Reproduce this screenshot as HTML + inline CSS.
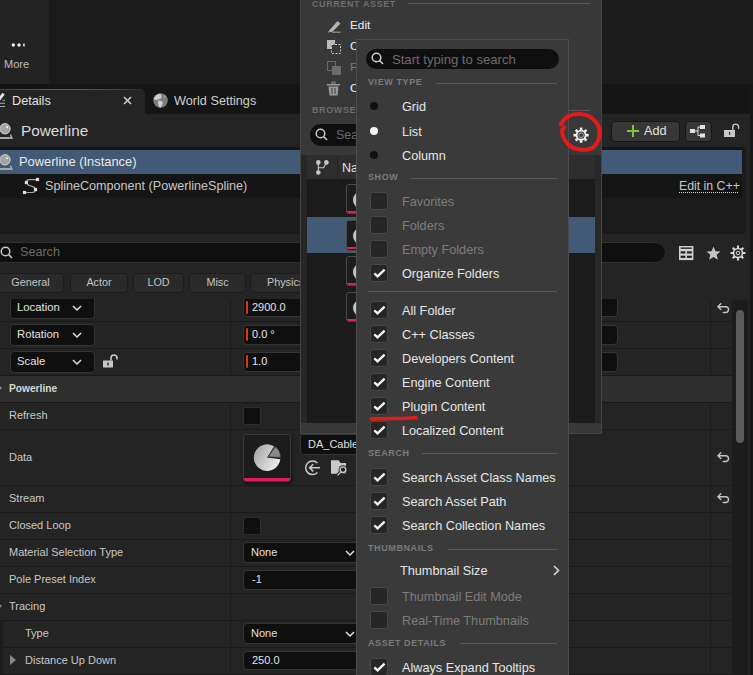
<!DOCTYPE html>
<html><head><meta charset="utf-8">
<style>
*{box-sizing:border-box;margin:0;padding:0}
html,body{width:753px;height:675px;overflow:hidden;background:#1a1a1a;font-family:"Liberation Sans",sans-serif;color:#c8c8c8}
.a{position:absolute}
.t{position:absolute;white-space:nowrap;line-height:1}
svg{position:absolute;overflow:visible}
.row{position:absolute;left:0;width:732px;height:27px;border-bottom:1px solid #1a1a1a;background:#242424}
.lbl{position:absolute;left:9px;font-size:11.5px;color:#c8c8c8;white-space:nowrap;line-height:1}
.vbox{position:absolute;background:#0f0f0f;border:1px solid #343434;border-radius:4px}
.chip{position:absolute;top:272.5px;height:20px;background:#2a2a2a;border:1px solid #1b1b1b;border-radius:4px;font-size:10.8px;color:#c4c4c4;text-align:center;line-height:16.5px}
.cb{position:absolute;left:370px;width:17.5px;height:17.5px;background:#262626;border:1px solid #474747;border-radius:3px}
.mi{position:absolute;left:402px;font-size:12.7px;color:#e6e6e6;white-space:nowrap;line-height:1}
.dis{color:#7c7c7c}
.hd{position:absolute;left:368px;font-size:9px;font-weight:bold;letter-spacing:0.6px;color:#7a7a7a;white-space:nowrap;line-height:1}
.hl{position:absolute;height:1px;background:#5a5a5a}
</style></head><body>

<!-- top area -->
<div class="a" style="left:0;top:0;width:49px;height:84px;background:#232323"></div>
<div class="a" style="left:49px;top:0;width:704px;height:84px;background:#1b1b1b"></div>
<div class="a" style="left:0;top:84px;width:753px;height:30px;background:#151515"></div>
<svg style="left:11px;top:42px" width="16" height="6"><circle cx="2.3" cy="3" r="1.7" fill="#f0f0f0"/><circle cx="8" cy="3" r="1.7" fill="#f0f0f0"/><path d="M13.6 1.3 A1.7 1.7 0 0 0 13.6 4.7Z" fill="#f0f0f0"/></svg>
<div class="t" style="left:4px;top:59px;font-size:11px;color:#bdbdbd">More</div>

<!-- tabs -->
<div class="a" style="left:0;top:88.5px;width:145px;height:25.5px;background:#242424;border-top-right-radius:5px;overflow:hidden"><div style="position:absolute;left:0;top:0;width:145px;height:1.5px;background:linear-gradient(90deg,#0f4a8a,#0a74e0 45%,#0f4a8a 85%,#2a2a2a)"></div></div>

<svg style="left:0;top:92px" width="8" height="16"><path d="M-1 7.6 L3.6 1.6" stroke="#e4e4e4" stroke-width="2.8"/><rect x="2.6" y="7.8" width="2.4" height="1" fill="#a8a8a8"/><rect x="0" y="10.8" width="5" height="1" fill="#a8a8a8"/><rect x="0" y="14" width="5" height="1" fill="#a8a8a8"/></svg>
<div class="t" style="left:12px;top:95px;font-size:12.7px;color:#e2e2e2">Details</div>
<svg style="left:123px;top:96px" width="9" height="9"><path d="M1 1L8 8M8 1L1 8" stroke="#cfcfcf" stroke-width="1.5"/></svg>
<svg style="left:152.5px;top:92.5px" width="15" height="15"><circle cx="7.5" cy="7.5" r="7.3" fill="#7e7e7e"/><path d="M1.2 4.5 Q3 1.5 6.5 0.8 Q9 1.5 8.2 3.5 Q9.5 5 7.2 5.6 Q5.8 6.8 4.2 6.2 Q3 7.6 1.3 6.8Z" fill="#cfcfcf"/><path d="M5.3 7.6 Q8.5 7.4 9.8 9.2 Q9.4 12.2 7.6 14.4 Q5.8 14.6 5.6 12.4 Q4.8 10 5.3 7.6Z" fill="#cfcfcf"/><path d="M10.5 2 Q12.5 3 13.2 4.6 Q11.8 4.8 10.5 2Z" fill="#bbb"/></svg>
<div class="t" style="left:174px;top:95px;font-size:12.7px;color:#cfcfcf">World Settings</div>

<!-- details panel -->
<div class="a" style="left:0;top:114px;width:750px;height:561px;background:#242424"></div><div class="a" style="left:750px;top:84px;width:3px;height:591px;background:#171717"></div>
<svg style="left:0;top:123px" width="16" height="17"><circle cx="5" cy="5.8" r="5.2" fill="#a2a2a2" stroke="#d6d6d6" stroke-width="0.9"/><rect x="6.1" y="3.3" width="1.8" height="1.8" fill="#f8f8f8"/><path d="M-1 14 H10.6 L9.9 11.6 L11.1 11.3 L13.2 15.9 H-1Z" fill="#a8a8a8"/></svg>
<div class="t" style="left:21px;top:123px;font-size:15.3px;color:#dcdcdc">Powerline</div>
<div class="a" style="left:611px;top:120.5px;width:68.5px;height:21px;background:#373737;border:1px solid #161616;border-radius:4px"></div>
<svg style="left:626px;top:124px" width="14" height="14"><path d="M7 1V13M1 7H13" stroke="#7fc43a" stroke-width="2"/></svg>
<div class="t" style="left:644px;top:125px;font-size:12.7px;color:#e0e0e0">Add</div>
<div class="a" style="left:684.5px;top:120.5px;width:27px;height:21px;background:#373737;border:1px solid #161616;border-radius:4px"></div>
<svg style="left:690px;top:125px" width="16" height="13"><rect x="0" y="4" width="5" height="4" fill="#e0e0e0"/><rect x="10" y="0" width="5" height="4" fill="#e0e0e0"/><rect x="10" y="8.5" width="5" height="4" fill="#e0e0e0"/><path d="M5 6H8M8 2V10.5M8 2H10M8 10.5H10" stroke="#e0e0e0" stroke-width="1"/></svg>
<svg style="left:724px;top:122px" width="15" height="16"><path d="M8.8 8V5A2.9 2.9 0 0 1 14.6 5V6.3" stroke="#c8c8c8" stroke-width="1.4" fill="none" stroke-linecap="round"/><rect x="0" y="8" width="11" height="7" fill="#c8c8c8"/><rect x="5" y="10" width="1.2" height="2.8" fill="#242424"/></svg>

<!-- tree -->
<div class="a" style="left:0;top:147px;width:746px;height:87px;background:#1b1b1b;border-bottom-right-radius:4px"></div><div class="a" style="left:0;top:147px;width:742px;height:51px;background:#151515"></div>
<div class="a" style="left:0;top:150px;width:742px;height:24px;background:#435a76"></div>
<svg style="left:0;top:154px" width="16" height="17"><circle cx="5" cy="5.8" r="5.2" fill="#a2a2a2" stroke="#d6d6d6" stroke-width="0.9"/><rect x="6.1" y="3.3" width="1.8" height="1.8" fill="#f8f8f8"/><path d="M-1 14 H10.6 L9.9 11.6 L11.1 11.3 L13.2 15.9 H-1Z" fill="#a8a8a8"/></svg>
<div class="t" style="left:19px;top:156px;font-size:12.9px;color:#e8e8e8">Powerline (Instance)</div>
<svg style="left:22px;top:177px" width="18" height="18"><path d="M15.5 2.6 H7 Q4.6 2.6 4.4 5.5 Q5.5 8.4 10 9.4 Q13.3 10.2 13.5 12.5 Q13.5 15.5 10.5 15.5 H2.5" stroke="#a8a8a8" stroke-width="1.1" fill="none"/><g fill="#dedede"><rect x="13.9" y="0.8999999999999999" width="3.2" height="3.2"/><rect x="2.8000000000000003" y="3.9" width="3.2" height="3.2"/><rect x="11.9" y="10.9" width="3.2" height="3.2"/><rect x="0.8999999999999999" y="13.9" width="3.2" height="3.2"/></g></svg>
<div class="t" style="left:45px;top:180px;font-size:12.6px;color:#c8c8c8">SplineComponent (PowerlineSpline)</div>
<div class="t" style="left:679px;top:180px;font-size:12.3px;color:#c8c8c8">Edit in C++</div>
<div class="a" style="left:679px;top:192px;width:60px;height:1px;background:repeating-linear-gradient(90deg,#d0d0d0 0 1px,transparent 1px 2px)"></div>

<!-- search -->
<div class="a" style="left:-10px;top:242px;width:676px;height:21px;background:#0f0f0f;border:1px solid #303030;border-radius:11px"></div>
<svg style="left:0;top:246px" width="14" height="14"><circle cx="5.5" cy="5.5" r="4.3" stroke="#c8c8c8" stroke-width="1.5" fill="none"/><path d="M8.5 8.5L12 12" stroke="#c8c8c8" stroke-width="1.6"/></svg>
<div class="t" style="left:20px;top:246px;font-size:12.6px;color:#6a6a6a">Search</div>
<svg style="left:678.8px;top:245.9px" width="15" height="15"><rect x="0" y="0" width="14.4" height="14.1" fill="#d0d0d0"/><g fill="#1f1f1f"><rect x="1.6" y="1.5" width="11.2" height="1.3"/><rect x="1.6" y="5.3" width="4.8" height="2.2"/><rect x="8" y="5.3" width="4.8" height="2.2"/><rect x="1.6" y="9.7" width="4.8" height="2.2"/><rect x="8" y="9.7" width="4.8" height="2.2"/></g></svg>
<svg style="left:705.5px;top:245.5px" width="15" height="15"><path d="M7.5 0.5 L9.5 5.2 L14.5 5.5 L10.7 8.8 L11.9 13.8 L7.5 11.1 L3.1 13.8 L4.3 8.8 L0.5 5.5 L5.5 5.2Z" fill="#c4c4c4"/></svg>
<svg style="left:730px;top:245px" width="16" height="16"><g stroke="#d8d8d8" stroke-width="2"><path d="M8 0.5V3.5M8 12.5V15.5M0.5 8H3.5M12.5 8H15.5M2.7 2.7L4.8 4.8M11.2 11.2L13.3 13.3M2.7 13.3L4.8 11.2M11.2 4.8L13.3 2.7"/></g><circle cx="8" cy="8" r="4.5" stroke="#d8d8d8" stroke-width="1.6" fill="none"/><circle cx="8" cy="8" r="1.8" stroke="#d8d8d8" stroke-width="1" fill="none"/></svg>

<!-- chips -->
<div class="chip" style="left:-6px;width:70px">&nbsp;General</div>
<div class="chip" style="left:70px;width:58px">Actor</div>
<div class="chip" style="left:133px;width:51px">LOD</div>
<div class="chip" style="left:189px;width:57px">Misc</div>
<div class="chip" style="left:250px;width:80px;text-align:left;padding-left:16px">Physics</div>

<!-- property rows -->
<div class="a" style="left:0;top:299px;width:753px;height:376px;overflow:hidden">
 <div style="position:absolute;left:0;top:-4px;width:753px;height:400px">
  <div class="row" style="top:0"></div>
  <div class="row" style="top:27px"></div>
  <div class="row" style="top:54px"></div>
  <div class="row" style="top:81px;background:#2e2e2e"></div>
  <div class="row" style="top:108px"></div>
  <div class="row" style="top:135px;height:56px"></div>
  <div class="row" style="top:191px"></div>
  <div class="row" style="top:218px"></div>
  <div class="row" style="top:245px"></div>
  <div class="row" style="top:272px"></div>
  <div class="row" style="top:299px"></div>
  <div class="row" style="top:326px"></div>
  <div class="row" style="top:353px"></div>
 </div>
</div>

<!-- property content (page coords) -->
<div class="a" style="left:230px;top:299px;width:1px;height:77px;background:#1a1a1a"></div>
<div class="a" style="left:230px;top:402px;width:1px;height:191px;background:#1a1a1a"></div>
<div class="a" style="left:230px;top:593px;width:1px;height:82px;background:#1a1a1a"></div>
<div class="a" style="left:710px;top:299px;width:1px;height:77px;background:#1a1a1a"></div><div class="a" style="left:710px;top:402px;width:1px;height:273px;background:#1a1a1a"></div>
<div class="a" style="left:732px;top:300px;width:16px;height:375px;background:#1c1c1c"></div>

<div class="a" style="left:736px;top:310px;width:8px;height:133px;background:#5a5a5a;border-radius:4px"></div>

<div class="a" style="left:0;top:299px;width:732px;height:376px;overflow:hidden">
 <div class="vbox" style="left:9.5px;top:-6px;width:85px;height:25.5px"></div>
 <div class="t" style="left:17px;top:3px;font-size:11.3px;color:#e2e2e2">Location</div>
 <svg style="left:72px;top:6px" width="10" height="6"><path d="M1 1L5 5L9 1" stroke="#e0e0e0" stroke-width="1.5" fill="none"/></svg>
 <div class="vbox" style="left:243px;top:-6px;width:80px;height:24px"></div>
 <div class="a" style="left:245.8px;top:2px;width:2.2px;height:13px;background:#d83a0e;border-radius:1px"></div>
 <div class="t" style="left:252px;top:3px;font-size:11px;color:#e6e6e6">2900.0</div>
 <div class="vbox" style="left:560px;top:-6px;width:58px;height:24px"></div>
</div>
<div class="vbox" style="left:9.5px;top:324.3px;width:85px;height:21.3px"></div>
<div class="t" style="left:17px;top:329px;font-size:11.3px;color:#e2e2e2">Rotation</div>
<svg style="left:72px;top:332px" width="10" height="6"><path d="M1 1L5 5L9 1" stroke="#e0e0e0" stroke-width="1.5" fill="none"/></svg>
<div class="vbox" style="left:243px;top:325px;width:80px;height:19.5px"></div>
<div class="a" style="left:245.8px;top:328px;width:2.2px;height:13px;background:#d83a0e;border-radius:1px"></div>
<div class="t" style="left:252px;top:329px;font-size:11px;color:#e6e6e6">0.0 °</div>
<div class="vbox" style="left:560px;top:325px;width:58px;height:19.5px"></div>

<div class="vbox" style="left:9.5px;top:351.3px;width:85px;height:21.3px"></div>
<div class="t" style="left:17px;top:356px;font-size:11.3px;color:#e2e2e2">Scale</div>
<svg style="left:72px;top:359px" width="10" height="6"><path d="M1 1L5 5L9 1" stroke="#e0e0e0" stroke-width="1.5" fill="none"/></svg>
<svg style="left:103px;top:354px" width="15" height="14"><path d="M8 6.5V4A3 3 0 0 1 14 4V5.5" stroke="#c8c8c8" stroke-width="1.6" fill="none"/><rect x="0" y="6.5" width="10" height="7" fill="#c8c8c8"/><rect x="4.3" y="8.5" width="1.4" height="3" fill="#242424"/></svg>
<div class="vbox" style="left:243px;top:352px;width:80px;height:19.5px"></div>
<div class="a" style="left:245.8px;top:355px;width:2.2px;height:13px;background:#d83a0e;border-radius:1px"></div>
<div class="t" style="left:252px;top:356px;font-size:11px;color:#e6e6e6">1.0</div>
<div class="vbox" style="left:560px;top:352px;width:58px;height:19.5px"></div>

<svg style="left:-3px;top:387px" width="6" height="5"><path d="M0 0H5L2.5 4Z" fill="#9a9a9a"/></svg>
<div class="t" style="left:9px;top:384px;font-size:10.2px;font-weight:bold;color:#d8d8d8">Powerline</div>

<div class="t" style="left:9px;top:410px;font-size:11px;color:#c8c8c8">Refresh</div>
<div class="a" style="left:243px;top:407px;width:18px;height:18px;background:#0f0f0f;border:1px solid #2e2e2e;border-radius:3px"></div>

<div class="t" style="left:9px;top:452px;font-size:11px;color:#c8c8c8">Data</div>
<div class="a" style="left:243.4px;top:434px;width:47.4px;height:48px;background:#1c1c1c;border:1px solid #3a3a3a;border-radius:3px;box-shadow:1px 2px 3px #151515;overflow:hidden"><div style="position:absolute;left:0;bottom:0;width:100%;height:2.6px;background:#dc1f5a"></div></div>

<svg style="left:253px;top:443px" width="30" height="30"><defs><linearGradient id="pg" x1="0" y1="0.2" x2="1" y2="0.8"><stop offset="0" stop-color="#a4a4a4"/><stop offset="1" stop-color="#f2f2f2"/></linearGradient></defs><path d="M14.1 14.6 L27.3 16.22 A13.3 13.3 0 1 1 21.15 3.32 Z" fill="url(#pg)"/><path d="M15.3 13.7 L22.2 3.87 A12 12 0 0 1 27.3 14.33 Z" fill="#8a8a8a" stroke="#4a4a4a" stroke-width="0.7"/></svg>
<div class="vbox" style="left:300px;top:434px;width:70px;height:21px"></div>
<div class="t" style="left:308px;top:439px;font-size:11px;color:#e0e0e0">DA_Cable</div>
<svg style="left:304px;top:459px" width="18" height="18"><path d="M13.4 4.1 A6.8 6.8 0 1 0 13.4 13.5" stroke="#c8c8c8" stroke-width="1.5" fill="none"/><path d="M16 8.8 H5.6 M9.2 5.2 L5.6 8.8 L9.2 12.4" stroke="#c8c8c8" stroke-width="1.6" fill="none"/></svg>
<svg style="left:330px;top:459px" width="18" height="19"><path d="M1 1.3 H8.8 L10.5 4 H16 V14.8 H1 Z" fill="#c8c8c8"/><path d="M10.6 13 L7.4 16.6" stroke="#242424" stroke-width="3.4"/><circle cx="13" cy="10.7" r="4.4" fill="#242424"/><circle cx="13" cy="10.7" r="2.8" stroke="#c8c8c8" stroke-width="1.4" fill="#242424"/><path d="M10.8 12.9 L7.6 16.4" stroke="#c8c8c8" stroke-width="1.4"/></svg>

<div class="t" style="left:9px;top:493px;font-size:11px;color:#c8c8c8">Stream</div>
<div class="t" style="left:9px;top:520px;font-size:11px;color:#c8c8c8">Closed Loop</div>
<div class="a" style="left:243px;top:517px;width:18px;height:18px;background:#0f0f0f;border:1px solid #2e2e2e;border-radius:3px"></div>
<div class="t" style="left:9px;top:547px;font-size:11px;color:#c8c8c8">Material Selection Type</div>
<div class="vbox" style="left:243px;top:542px;width:120px;height:21px"></div>
<div class="t" style="left:251px;top:547px;font-size:11px;color:#e0e0e0">None</div>
<svg style="left:345px;top:550px" width="10" height="6"><path d="M1 1L5 5L9 1" stroke="#e0e0e0" stroke-width="1.5" fill="none"/></svg>
<div class="t" style="left:9px;top:574px;font-size:11px;color:#c8c8c8">Pole Preset Index</div>
<div class="vbox" style="left:243px;top:570px;width:120px;height:20px"></div>
<div class="t" style="left:252px;top:574px;font-size:11px;color:#e0e0e0">-1</div>
<svg style="left:-3px;top:605px" width="6" height="5"><path d="M0 0H5L2.5 4Z" fill="#8a8a8a"/></svg>
<div class="t" style="left:9px;top:601px;font-size:11px;color:#c8c8c8">Tracing</div>
<div class="a" style="left:0;top:620px;width:3px;height:55px;background:#1c1c1c"></div>
<div class="t" style="left:25px;top:628px;font-size:11px;color:#c8c8c8">Type</div>
<div class="vbox" style="left:243px;top:623px;width:120px;height:21px"></div>
<div class="t" style="left:251px;top:628px;font-size:11px;color:#e0e0e0">None</div>
<svg style="left:345px;top:631px" width="10" height="6"><path d="M1 1L5 5L9 1" stroke="#e0e0e0" stroke-width="1.5" fill="none"/></svg>
<svg style="left:10px;top:655px" width="7" height="10"><path d="M0 0L6 5L0 10Z" fill="#8a8a8a"/></svg>
<div class="t" style="left:25px;top:655px;font-size:11px;color:#c8c8c8">Distance Up Down</div>
<div class="vbox" style="left:243px;top:651px;width:120px;height:19px"></div>
<div class="t" style="left:252px;top:655px;font-size:11px;color:#e6e6e6">250.0</div>

<svg style="left:717px;top:303px" width="14" height="12"><path d="M3.8 0.8L0.9 3.7L3.8 6.6M0.9 3.7H8.6A2.9 2.9 0 0 1 8.6 9.5H6.3" stroke="#c4c4c4" stroke-width="1.4" fill="none" stroke-linecap="round"/></svg>
<svg style="left:717px;top:452px" width="14" height="12"><path d="M3.8 0.8L0.9 3.7L3.8 6.6M0.9 3.7H8.6A2.9 2.9 0 0 1 8.6 9.5H6.3" stroke="#c4c4c4" stroke-width="1.4" fill="none" stroke-linecap="round"/></svg>
<svg style="left:717px;top:493px" width="14" height="12"><path d="M3.8 0.8L0.9 3.7L3.8 6.6M0.9 3.7H8.6A2.9 2.9 0 0 1 8.6 9.5H6.3" stroke="#c4c4c4" stroke-width="1.4" fill="none" stroke-linecap="round"/></svg>


<!-- content browser popup -->
<div class="a" style="left:300px;top:-2px;width:302px;height:435.5px;background:#383838;border:1px solid #454545;border-top:none"></div>
<div class="t" style="left:312px;top:-1px;font-size:9px;font-weight:bold;letter-spacing:0.6px;color:#6e6e6e;margin-top:0.5px">CURRENT ASSET</div>
<div class="hl" style="left:408px;top:3px;width:182px;background:#575757"></div>
<svg style="left:327px;top:19px" width="15" height="15"><path d="M3.2 10.3 L10.6 2 L13.4 4.6 L5.8 12.6 L0.8 13.6Z" fill="#b4b4b4"/><rect x="5" y="12.6" width="8.5" height="1.1" fill="#a0a0a0"/></svg>
<div class="t" style="left:350px;top:20px;font-size:11.8px;color:#f0f0f0">Edit</div>
<svg style="left:327px;top:40px" width="15" height="15"><rect x="0" y="0" width="8" height="9" fill="#b8b8b8"/><rect x="4.5" y="4.5" width="9" height="9" fill="#383838" stroke="#c8c8c8" stroke-width="1" stroke-dasharray="2 1.5"/></svg>
<div class="t" style="left:350px;top:41px;font-size:11.8px;color:#f0f0f0">C</div>
<svg style="left:327px;top:61px" width="15" height="15"><rect x="0.5" y="0.5" width="8" height="9" fill="none" stroke="#6a6a6a" stroke-width="1"/><rect x="5" y="5" width="9" height="9" fill="#6a6a6a"/></svg>
<div class="t" style="left:350px;top:62px;font-size:11.8px;color:#7a7a7a">F</div>
<svg style="left:327px;top:82px" width="14" height="14"><rect x="0" y="2" width="13" height="1.5" fill="#9a9a9a"/><rect x="5" y="0" width="3" height="2" fill="none" stroke="#9a9a9a" stroke-width="0.8"/><path d="M1.5 4.5H11.5L10.5 13.5H2.5Z" fill="#9a9a9a"/><path d="M5 6V12M8 6V12" stroke="#383838" stroke-width="1"/></svg>
<div class="t" style="left:350px;top:83px;font-size:11.8px;color:#f0f0f0">C</div>
<div class="t" style="left:312px;top:106px;font-size:9px;font-weight:bold;letter-spacing:0.6px;color:#6e6e6e">BROWSE</div>
<div class="hl" style="left:569px;top:110px;width:21px;background:#575757"></div>
<div class="a" style="left:310px;top:124px;width:60px;height:22px;background:#0f0f0f;border-radius:11px"></div>
<svg style="left:315px;top:128px" width="14" height="14"><circle cx="5.5" cy="5.5" r="4.3" stroke="#c8c8c8" stroke-width="1.5" fill="none"/><path d="M8.5 8.5L12 12" stroke="#c8c8c8" stroke-width="1.6"/></svg>
<div class="t" style="left:336px;top:129px;font-size:12.5px;color:#6a6a6a">Sea</div>
<!-- list -->
<div class="a" style="left:301px;top:155px;width:300px;height:268px;background:#262626"></div>
<div class="a" style="left:307px;top:155px;width:288px;height:24px;background:#2e2e2e"></div>
<div class="a" style="left:337px;top:155px;width:1px;height:24px;background:#242424"></div>
<svg style="left:314.5px;top:158.5px" width="15" height="16"><circle cx="3.3" cy="3.4" r="2.3" fill="#c8c8c8"/><circle cx="11.4" cy="3.4" r="2.3" fill="#c8c8c8"/><circle cx="3.3" cy="13.5" r="2.3" fill="#c8c8c8"/><path d="M3.3 3.4V13.5M11.4 3.4 L8.6 8.8 H3.3" stroke="#c8c8c8" stroke-width="1.1" fill="none"/></svg>
<div class="t" style="left:342px;top:162px;font-size:12.5px;color:#e0e0e0">Na</div>
<div class="a" style="left:307px;top:179px;width:288px;height:244px;background:#1b1b1b"></div>
<div class="a" style="left:307px;top:216.6px;width:288px;height:36.4px;background:#435a76"></div>
<div class="a" style="left:345.5px;top:183.7px;width:30px;height:30.5px;background:#1c1c1c;border:1.5px solid #4a4a4a;border-radius:3px;overflow:hidden"><div style="position:absolute;left:6.5px;top:6px;width:18px;height:18px;border-radius:50%;background:#c4c4c4"></div><div style="position:absolute;left:0;bottom:0.3px;width:100%;height:1.9px;background:#dc1f5a"></div></div>
<div class="a" style="left:345.5px;top:220px;width:30px;height:30.5px;background:#1c1c1c;border:1.5px solid #4a4a4a;border-radius:3px;overflow:hidden"><div style="position:absolute;left:6.5px;top:6px;width:18px;height:18px;border-radius:50%;background:#c4c4c4"></div><div style="position:absolute;left:0;bottom:0.3px;width:100%;height:1.9px;background:#dc1f5a"></div></div>
<div class="a" style="left:345.5px;top:255.8px;width:30px;height:30.5px;background:#1c1c1c;border:1.5px solid #4a4a4a;border-radius:3px;overflow:hidden"><div style="position:absolute;left:6.5px;top:6px;width:18px;height:18px;border-radius:50%;background:#c4c4c4"></div><div style="position:absolute;left:0;bottom:0.3px;width:100%;height:1.9px;background:#dc1f5a"></div></div>
<div class="a" style="left:345.5px;top:291.7px;width:30px;height:30.5px;background:#1c1c1c;border:1.5px solid #4a4a4a;border-radius:3px;overflow:hidden"><div style="position:absolute;left:6.5px;top:6px;width:18px;height:18px;border-radius:50%;background:#c4c4c4"></div><div style="position:absolute;left:0;bottom:0.3px;width:100%;height:1.9px;background:#dc1f5a"></div></div>
<div class="a" style="left:595px;top:155px;width:6px;height:268px;background:#282828"></div>
<div class="a" style="left:569px;top:123px;width:27px;height:32px;background:#383838"></div>
<div class="hl" style="left:569px;top:110px;width:21px;background:#575757"></div>

<!-- dropdown menu -->
<div class="a" style="left:356px;top:39px;width:213px;height:640px;background:#3a3a3a;border:1px solid #4c4c4c"></div>
<div class="a" style="left:366px;top:49px;width:193px;height:20px;background:#0f0f0f;border-radius:10px"></div>
<svg style="left:371px;top:52px" width="14" height="14"><circle cx="5.5" cy="5.5" r="4.3" stroke="#d0d0d0" stroke-width="1.5" fill="none"/><path d="M8.5 8.5L12 12" stroke="#d0d0d0" stroke-width="1.6"/></svg>
<div class="t" style="left:392px;top:53px;font-size:13.1px;color:#6c6c6c">Start typing to search</div>
<div class="hd" style="top:78.2px">VIEW TYPE</div><div class="hl" style="left:436px;top:82.7px;width:121px"></div>
<div class="a" style="left:370px;top:102px;width:8px;height:8px;border-radius:50%;background:#111"></div>
<div class="mi" style="top:101px">Grid</div>
<div class="a" style="left:370px;top:126.5px;width:8px;height:8px;border-radius:50%;background:#f4f4f4"></div>
<div class="mi" style="top:125.5px">List</div>
<div class="a" style="left:370px;top:150.5px;width:8px;height:8px;border-radius:50%;background:#111"></div>
<div class="mi" style="top:149.5px">Column</div>
<div class="hd" style="top:173.2px">SHOW</div><div class="hl" style="left:411px;top:177.7px;width:146px"></div>
<div class="cb" style="top:192.4px"></div>
<div class="mi dis" style="top:196px">Favorites</div>
<div class="cb" style="top:216.4px"></div>
<div class="mi dis" style="top:220px">Folders</div>
<div class="cb" style="top:240.4px"></div>
<div class="mi dis" style="top:244px">Empty Folders</div>
<div class="cb" style="top:264.4px"></div><svg style="left:373px;top:268px" width="13" height="11"><path d="M1.3 5.3L4.6 8.4L11.6 1.6" stroke="#f4f4f4" stroke-width="2.3" fill="none"/></svg>
<div class="mi" style="top:268px">Organize Folders</div>
<div class="hl" style="left:368px;top:291px;width:189px"></div>
<div class="cb" style="top:301.4px"></div><svg style="left:373px;top:305px" width="13" height="11"><path d="M1.3 5.3L4.6 8.4L11.6 1.6" stroke="#f4f4f4" stroke-width="2.3" fill="none"/></svg>
<div class="mi" style="top:305px">All Folder</div>
<div class="cb" style="top:325.4px"></div><svg style="left:373px;top:329px" width="13" height="11"><path d="M1.3 5.3L4.6 8.4L11.6 1.6" stroke="#f4f4f4" stroke-width="2.3" fill="none"/></svg>
<div class="mi" style="top:329px">C++ Classes</div>
<div class="cb" style="top:349.4px"></div><svg style="left:373px;top:353px" width="13" height="11"><path d="M1.3 5.3L4.6 8.4L11.6 1.6" stroke="#f4f4f4" stroke-width="2.3" fill="none"/></svg>
<div class="mi" style="top:353px">Developers Content</div>
<div class="cb" style="top:373.4px"></div><svg style="left:373px;top:377px" width="13" height="11"><path d="M1.3 5.3L4.6 8.4L11.6 1.6" stroke="#f4f4f4" stroke-width="2.3" fill="none"/></svg>
<div class="mi" style="top:377px">Engine Content</div>
<div class="cb" style="top:397.4px"></div><svg style="left:373px;top:401px" width="13" height="11"><path d="M1.3 5.3L4.6 8.4L11.6 1.6" stroke="#f4f4f4" stroke-width="2.3" fill="none"/></svg>
<div class="mi" style="top:401px">Plugin Content</div>
<div class="cb" style="top:421.4px"></div><svg style="left:373px;top:425px" width="13" height="11"><path d="M1.3 5.3L4.6 8.4L11.6 1.6" stroke="#f4f4f4" stroke-width="2.3" fill="none"/></svg>
<div class="mi" style="top:425px">Localized Content</div>
<div class="hd" style="top:448.9px">SEARCH</div><div class="hl" style="left:422px;top:453.4px;width:135px"></div>
<div class="cb" style="top:468.4px"></div><svg style="left:373px;top:472px" width="13" height="11"><path d="M1.3 5.3L4.6 8.4L11.6 1.6" stroke="#f4f4f4" stroke-width="2.3" fill="none"/></svg>
<div class="mi" style="top:472px">Search Asset Class Names</div>
<div class="cb" style="top:492.4px"></div><svg style="left:373px;top:496px" width="13" height="11"><path d="M1.3 5.3L4.6 8.4L11.6 1.6" stroke="#f4f4f4" stroke-width="2.3" fill="none"/></svg>
<div class="mi" style="top:496px">Search Asset Path</div>
<div class="cb" style="top:516.4px"></div><svg style="left:373px;top:520px" width="13" height="11"><path d="M1.3 5.3L4.6 8.4L11.6 1.6" stroke="#f4f4f4" stroke-width="2.3" fill="none"/></svg>
<div class="mi" style="top:520px">Search Collection Names</div>
<div class="hd" style="top:544.2px">THUMBNAILS</div><div class="hl" style="left:448px;top:548.7px;width:109px"></div>
<div class="mi" style="top:564.5px;left:400px">Thumbnail Size</div>
<svg style="left:553px;top:565px" width="7" height="11"><path d="M1 1L5.5 5.5L1 10" stroke="#d8d8d8" stroke-width="1.6" fill="none"/></svg>
<div class="cb" style="top:587.4px"></div>
<div class="mi dis" style="top:591px">Thumbnail Edit Mode</div>
<div class="cb" style="top:611.4px"></div>
<div class="mi dis" style="top:615px">Real-Time Thumbnails</div>
<div class="hd" style="top:638.5px">ASSET DETAILS</div><div class="hl" style="left:460px;top:643px;width:97px"></div>
<div class="cb" style="top:658.4px"></div><svg style="left:373px;top:662px" width="13" height="11"><path d="M1.3 5.3L4.6 8.4L11.6 1.6" stroke="#f4f4f4" stroke-width="2.3" fill="none"/></svg>
<div class="mi" style="top:662px">Always Expand Tooltips</div>
<!-- annotations -->
<svg style="left:0;top:0" width="753" height="675"><path d="M560.8 124.2 C564 118.5 570 114 578.5 114 C588 114 596 119 599.3 128.5 C601 137 597.5 145.5 590.5 148.8 C583 151 573 149.5 568 144 C563 139 561.6 133 562.3 129.5 L564.3 127.2" stroke="#e41b1b" stroke-width="4.1" fill="none" stroke-linecap="round" stroke-linejoin="round"/><path d="M371 419 Q395 418.5 406 418.3 Q412 417.6 416 417.8" stroke="#e41b1b" stroke-width="3.6" fill="none" stroke-linecap="round"/></svg>
<svg style="left:573px;top:126.5px" width="17" height="17"><g transform="translate(8.1 8.2)"><g fill="#f4f4f4"><rect x="-1.3" y="-7.6" width="2.6" height="4" transform="rotate(0)"/><rect x="-1.3" y="-7.6" width="2.6" height="4" transform="rotate(45)"/><rect x="-1.3" y="-7.6" width="2.6" height="4" transform="rotate(90)"/><rect x="-1.3" y="-7.6" width="2.6" height="4" transform="rotate(135)"/><rect x="-1.3" y="-7.6" width="2.6" height="4" transform="rotate(180)"/><rect x="-1.3" y="-7.6" width="2.6" height="4" transform="rotate(225)"/><rect x="-1.3" y="-7.6" width="2.6" height="4" transform="rotate(270)"/><rect x="-1.3" y="-7.6" width="2.6" height="4" transform="rotate(315)"/></g><circle r="5.4" fill="#f4f4f4"/><circle r="3.6" fill="#3c3c3c"/><circle r="2.3" fill="none" stroke="#b0b0b0" stroke-width="0.9"/></g></svg>
</body></html>
